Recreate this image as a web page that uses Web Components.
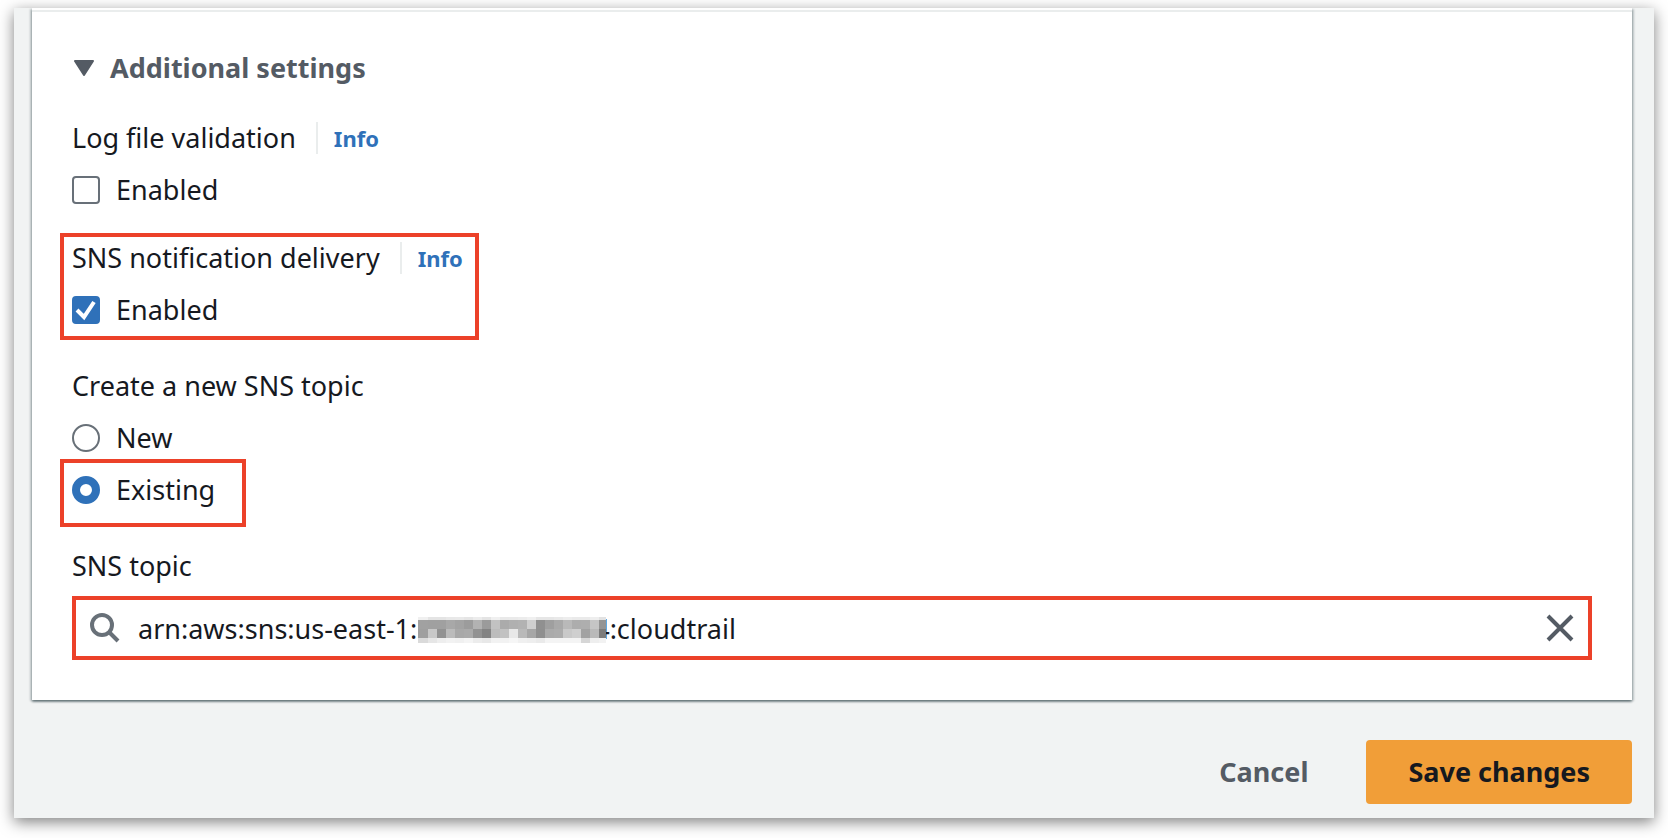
<!DOCTYPE html>
<html lang="en">
<head>
<meta charset="utf-8">
<title>Edit trail</title>
<style>
  body {
    margin: 0;
    padding: 8px 14px 20px;
    background: #fff;
    color: #16191f;
    font: 27px/32px "Noto Sans", "Open Sans", sans-serif;
    --muted: #545b64;
    --icon: #687078;
    --blue: #2f71b9;
    --line: #eaeded;
    --marker: #ec4129;
  }
</style>
</head>
<body>
<trail-page>
  <settings-card>
    <section-toggle>Additional settings</section-toggle>
    <check-field label="Log file validation"></check-field>
    <call-out style="--inset: -9px -16px -14px -12px"><check-field label="SNS notification delivery" checked></check-field></call-out>
    <topic-choice></topic-choice>
    <topic-search value="arn:aws:sns:us-east-1:2                       4:cloudtrail"></topic-search>
  </settings-card>
  <form-actions slot="footer"></form-actions>
</trail-page>

<script>
const define = (name, markup, setup) => {
  const template = document.createElement('template');
  template.innerHTML = `<style>*, *::before { box-sizing: border-box; }</style>${markup}`;
  customElements.define(name, class extends HTMLElement {
    constructor() {
      super();
      this.attachShadow({ mode: 'open' }).append(template.content.cloneNode(true));
    }
    connectedCallback() {
      if (setup) setup(this, this.shadowRoot);
    }
  });
};

define('trail-page', `
  <style>
    :host {
      display: block;
      background: #f1f3f3;
      box-shadow: 0 4px 14px rgba(0, 0, 0, .5);
    }
    main { overflow: hidden; padding: 0 22px 14px 18px; }
  </style>
  <main><slot></slot><slot name="footer"></slot></main>
`);

define('settings-card', `
  <style>
    :host {
      display: block;
      background: #fff;
      padding-top: 2px;
      box-shadow: 0 2px 2px rgba(0, 28, 36, .4), 2px 1px 2px rgba(0, 28, 36, .2), -2px 1px 2px rgba(0, 28, 36, .2);
    }
    section {
      display: flex;
      flex-direction: column;
      align-items: flex-start;
      border-top: 2px solid var(--line);
      padding: 40px;
    }
  </style>
  <section><slot></slot></section>
`);

define('section-toggle', `
  <style>
    :host { display: block; margin-bottom: 38px; }
    h3 { margin: 0; font: inherit; }
    button {
      display: flex;
      align-items: center;
      gap: 16px;
      padding: 0;
      border: 0;
      background: none;
      color: var(--muted);
      font: inherit;
      font-weight: 700;
    }
    svg { display: block; }
  </style>
  <h3><button type="button" aria-expanded="true">
    <svg width="22" height="16" viewBox="0 0 22 16" aria-hidden="true"><path d="M3 1h18l-9 14z" fill="currentColor" stroke="currentColor" stroke-width="2" stroke-linejoin="round"/></svg>
    <slot></slot>
  </button></h3>
`);

define('call-out', `
  <style>
    :host { display: block; position: relative; }
    :host::before {
      content: "";
      position: absolute;
      inset: var(--inset);
      border: 4px solid var(--marker);
      pointer-events: none;
    }
  </style>
  <slot></slot>
`);

define('check-field', `
  <style>
    :host { display: grid; gap: 20px; }
    :host(:not([checked])) { margin-bottom: 36px; }
    .head { display: flex; }
    a {
      margin-left: 20px;
      padding-left: 16px;
      border-left: 2px solid var(--line);
      color: var(--blue);
      font-size: 22px;
      font-weight: 700;
      text-decoration: none;
    }
    label { display: flex; align-items: center; gap: 16px; }
    .box { display: grid; }
    .box > * { grid-area: 1 / 1; }
    input {
      appearance: none;
      width: 28px;
      height: 28px;
      margin: 0;
      border: 2px solid var(--icon);
      border-radius: 4px;
      background: #fff;
    }
    input:checked { border-color: var(--blue); background: var(--blue); }
    svg { visibility: hidden; pointer-events: none; }
    input:checked + svg { visibility: visible; }
  </style>
  <div class="head"><span id="title"></span><a href="#info">Info</a></div>
  <label><span class="box"><input type="checkbox" aria-describedby="title"><svg width="28" height="28" viewBox="0 0 28 28" aria-hidden="true"><path d="M5 14l7 7L22 6" fill="none" stroke="#fff" stroke-width="4"/></svg></span>Enabled</label>
`, (host, root) => {
  root.getElementById('title').textContent = host.getAttribute('label');
  root.querySelector('input').checked = host.hasAttribute('checked');
});

define('topic-choice', `
  <style>
    :host { display: block; margin: 44px 0; }
    .group { display: grid; justify-items: start; gap: 20px; }
    label { display: flex; align-items: center; gap: 16px; }
    input {
      appearance: none;
      width: 28px;
      height: 28px;
      margin: 0;
      border: 2px solid var(--icon);
      border-radius: 50%;
      background: #fff;
    }
    input:checked { border: 8px solid var(--blue); }
  </style>
  <div class="group" role="radiogroup" aria-labelledby="title">
    <span id="title">Create a new SNS topic</span>
    <label><input type="radio" name="topic">New</label>
    <call-out style="--inset: -15px -31px -21px -12px"><label><input type="radio" name="topic" checked>Existing</label></call-out>
  </div>
`);

define('redacted-digits', `
  <style>
    :host { display: block; }
    svg { display: block; }
  </style>
  <svg width="188" height="26" viewBox="0 0 188 26" shape-rendering="crispEdges" aria-hidden="true">
    <rect width="188" height="26" fill="#edf1f2"/>
  </svg>
`, (host, root) => {
  const svg = root.querySelector('svg');
  if (svg.childElementCount > 1) return;
  const rows = [
    'f0 e4 e4 e8 e9 e5 ec e4 f0 e9 ea ec f0 e6 e6 e9 ed ea ea ee e2',
    'a1 a0 a0 a8 a3 9c b2 9b c2 ab b0 b2 cf 90 9f a9 b9 ad ae c5 94',
    '9f c8 92 bb a8 aa 92 83 bc c2 e8 b9 a6 8f aa ac c9 cf a2 b9 7c',
    'da e6 ee f2 f0 f4 ec e8 f2 f2 f6 f0 ee ea f4 f4 f4 f4 d6 ee f2'
  ];
  const tops = [0, 3, 12, 21, 26];
  rows.forEach((row, r) => row.split(' ').forEach((tone, c) => {
    const cell = document.createElementNS('http://www.w3.org/2000/svg', 'rect');
    const x = c ? c * 9 + 1 : 0;
    cell.setAttribute('x', x);
    cell.setAttribute('y', tops[r]);
    cell.setAttribute('width', Math.min(c ? 9 : 10, 188 - x));
    cell.setAttribute('height', tops[r + 1] - tops[r]);
    cell.setAttribute('fill', '#' + tone.repeat(3));
    svg.append(cell);
  }));
});

define('topic-search', `
  <style>
    :host { display: block; align-self: stretch; }
    label { display: block; margin-bottom: 14px; }
    .field {
      position: relative;
      display: flex;
      align-items: center;
      gap: 18px;
      height: 64px;
      padding: 0 12px 0 14px;
      border: 4px solid var(--marker);
      background: #fff;
    }
    svg { display: block; flex: none; }
    input {
      flex: 1;
      min-width: 0;
      height: 48px;
      padding: 0;
      border: 0;
      outline: 0;
      background: none;
      color: inherit;
      font: inherit;
    }
    button { padding: 0; border: 0; background: none; color: var(--muted); }
    redacted-digits { position: absolute; left: 342px; top: 17px; }
  </style>
  <label for="topic">SNS topic</label>
  <div class="field">
    <svg width="30" height="30" viewBox="0 0 30 30" aria-hidden="true"><g fill="none" stroke="var(--icon)" stroke-width="4"><circle cx="12" cy="12" r="10"/><path d="M19 19l9 9"/></g></svg>
    <input id="topic" type="text" spellcheck="false" autocomplete="off">
    <button type="button" aria-label="Clear"><svg width="32" height="32" viewBox="0 0 32 32"><path d="M4 4l24 24M28 4L4 28" fill="none" stroke="currentColor" stroke-width="4"/></svg></button>
    <redacted-digits></redacted-digits>
  </div>
`, (host, root) => {
  root.querySelector('input').value = host.getAttribute('value');
});

define('form-actions', `
  <style>
    :host { display: flex; justify-content: flex-end; gap: 16px; margin-top: 40px; }
    button {
      height: 64px;
      padding: 0 42px;
      border: 0;
      border-radius: 4px;
      background: none;
      color: var(--muted);
      font: inherit;
      font-weight: 700;
    }
    .primary { background: #f19e38; color: #16191f; }
  </style>
  <button type="button">Cancel</button>
  <button type="submit" class="primary">Save changes</button>
`);
</script>
</body>
</html>
